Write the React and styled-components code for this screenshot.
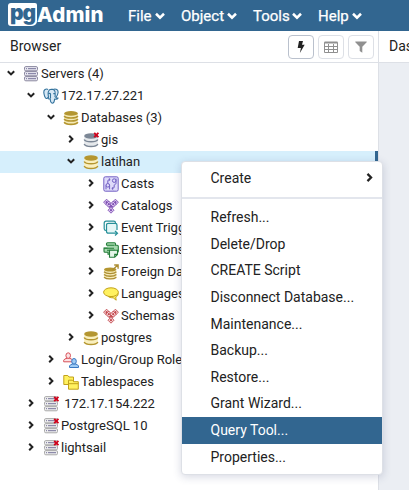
import React from "react";
import styled, { createGlobalStyle, css } from "styled-components";

const Global = createGlobalStyle`
  * { box-sizing: border-box; }
  body { margin: 0; background: #fff; font-family: Roboto, sans-serif; color: #222; overflow: hidden; }
`;

const Shell = styled.div`
  position: relative;
  display: flex;
  flex-direction: column;
  width: 409px;
  height: 490px;
  overflow: hidden;
`;
const Navbar = styled.nav`
  flex: none;
  display: flex;
  align-items: center;
  gap: 16px;
  height: 31px;
  padding-left: 8px;
  background: #326690;
  color: #fff;
`;
const Logo = styled.div`
  display: flex;
  align-items: center;
  width: 104px;
  height: 31px;
  padding-bottom: 2px;
`;
const LogoBadge = styled.span`
  flex: none;
  width: 29px;
  height: 23px;
  border-radius: 3px 2px 5px 3px;
  background: #fff;
  color: #326690;
  font: 900 21px/19px Inter, sans-serif;
  letter-spacing: -1.2px;
  text-align: center;
`;
const LogoName = styled.span`
  font: 800 20.5px/24px Inter, sans-serif;
  letter-spacing: 0.1px;
`;
const NavItem = styled.div`
  flex: none;
  display: flex;
  align-items: center;
  justify-content: space-between;
  width: ${(p) => p.$width}px;
  font-size: 15px;
  font-weight: 400;
  line-height: 30px;
  -webkit-text-stroke: 0.25px #fff;
`;
const Body = styled.div`
  flex: 1;
  display: flex;
  min-height: 0;
`;
const Browser = styled.section`
  width: 379px;
  border-right: 1px solid #dde0e6;
`;
const PanelHeader = styled.header`
  display: flex;
  align-items: center;
  height: 32px;
  padding: 0 4px 0 10px;
  border-bottom: 1px solid #dde0e6;
  background: #fff;
  font-size: 14px;
`;
const Title = styled.span`
  flex: 1;
  padding-bottom: 2px;
`;
const ToolButton = styled.button`
  display: flex;
  align-items: center;
  justify-content: center;
  width: 26px;
  height: 24px;
  margin-left: 4px;
  padding: 0;
  border: 1px solid ${(p) => (p.$active ? "#bac1cd" : "#dde0e6")};
  border-radius: 4px;
  background: #fff;
  color: ${(p) => (p.$active ? "#222" : "#909090")};
`;
const Dashboard = styled.section`
  flex: 1;
  background: #ebeef3;
  overflow: hidden;
`;
const Row = styled.div`
  display: flex;
  align-items: center;
  height: 22px;
  padding-left: ${(p) => 4 + p.$level * 20}px;
  font-size: 13px;
  white-space: pre;
  ${(p) =>
    p.$selected &&
    css`
      background: #d6effc;
      border-right: 3px solid #326690;
    `}
`;
const Caret = styled.span`
  display: flex;
  justify-content: center;
  width: 14px;
  margin: 0 5px 2px 0;
`;
const Glyph = styled.svg`
  flex: none;
  width: 16px;
  height: 16px;
  margin-right: 2px;
`;
const Label = styled.span`
  padding-bottom: 2px;
`;
const Menu = styled.div`
  position: absolute;
  left: 181px;
  top: 161px;
  width: 202px;
  height: 314px;
  padding: 3px 0;
  border: 1px solid #dde0e6;
  border-radius: 4px;
  background: #fff;
  box-shadow: 0 2px 9px rgba(50, 60, 110, 0.2);
`;
const MenuItem = styled.div`
  display: flex;
  align-items: center;
  justify-content: space-between;
  height: 26.6px;
  padding: 0 8px 1px 28.5px;
  font-size: 14px;
  line-height: 16px;
  color: ${(p) => (p.$active ? "#fff" : "#222")};
  background: ${(p) => (p.$active ? "#326690" : "transparent")};
`;
const Divider = styled.div`
  height: 2px;
  margin: 5.4px 0;
  background: #e3e6ed;
`;

const Chevron = ({ open, size = 8 }) => (
  <svg width={size} height={size} viewBox="0 0 8 8" fill="none" stroke="currentColor" strokeWidth="2">
    <path d={open ? "M.8 2.2 4 5.4 7.2 2.2" : "M2.2.8 5.4 4 2.2 7.2"} />
  </svg>
);

const Cross = () => <path d="m11.2.8 4.2 4.4M15.4.8l-4.2 4.4" stroke="#d0021b" strokeWidth="1.9" />;

const Server = ({ off }) => (
  <>
    {[1, 6, 11].map((y) => (
      <g key={y}>
        <rect x="1.5" y={y - 0.4} width="13" height="4.2" rx="1.3" fill={off ? "#eeeeee" : "#e9e8f1"} stroke={off ? "#aaa" : "#8b889f"} />
        <path d={`M3 ${y + 1.7}h1m1 0h8`} stroke="#77739a" />
      </g>
    ))}
    {off && <Cross />}
  </>
);

const Cylinder = ({ top = "#b49631", side = "#f9efbe", line = "#b49631", off }) => (
  <>
    <path d="M1.2 4v8.5c0 1.5 3 2.6 6.8 2.6s6.8-1.1 6.8-2.6V4Z" fill={side} />
    <ellipse cx="8" cy="4" rx="6.8" ry="2.7" fill={top} />
    <path
      d="M1.2 7.5c.8 1.6 3.4 2.3 6.8 2.3s6-.7 6.8-2.3M1.2 12c.8 1.9 3.4 2.6 6.8 2.6s6-.7 6.8-2.6"
      fill="none"
      stroke={line}
      strokeWidth="1.5"
    />
    {off && <Cross />}
  </>
);

const Diamonds = ({ line, fill }) => (
  <>
    {[[3.6, 4.2], [12.4, 4.2], [8, 8.2], [5.8, 6.2], [10.2, 6.2], [8, 12.2]].map(([x, y], i) => (
      <g key={i}>
        <path d={`M${x} ${y - 3}l3 3-3 3-3-3Z`} fill={fill} stroke={line} strokeWidth=".9" />
        <circle cx={x} cy={y} r="1.1" fill={line} />
      </g>
    ))}
  </>
);

const Person = ({ x, y, line, fill }) => (
  <g transform={`translate(${x} ${y})`} fill={fill} stroke={line}>
    <path d="M.5 9.5V8Q1 6.4 4 5.9h2Q9 6.4 9.5 8v1.5Z" />
    <ellipse cx="5" cy="3.3" rx="2.3" ry="2.8" />
  </g>
);

const icons = {
  servers: <Server />,
  serverOff: <Server off />,
  elephant: (
    <g fill="#d7e8f5" stroke="#34739d" strokeWidth="1.1" strokeLinejoin="round">
      <path d="M5.2 1.4C2.7.4.7 1.8.8 4.3c.1 2.5 1.3 5.8 2.5 6.2 1 .3 1.6-1 2.3-1.8" />
      <path d="M10 1.4c3-1.2 5.4.5 5.1 3.1-.2 2-1.3 4-2.3 5.2 1 .4 2 .2 2.3.3-.5 1.2-2 1.5-3.5 1.1-.2 2.3-.5 4.1-2.3 4.1-1.9 0-2-2-2.1-4.6-1 .8-2 .5-2.1-.3.8-.7.3-1.8.1-3.2-.3-2.8.3-5.8 3-5.9Z" />
      <path d="M5.3 5.9c1-.8 2-.6 2.2.2.2 1.2-.3 2.3.1 4M10.6 1.5c1.4 1.3 2 2.8 1.6 4.2-.3 1.5.5 2.4-.5 3.5M11.9 5.4l-1.6.2" fill="none" />
    </g>
  ),
  databases: (
    <>
      <path d="M1.2 4v8.5c0 1.5 3 2.6 6.8 2.6s6.8-1.1 6.8-2.6V4Z" fill="#f5eab7" />
      <ellipse cx="8" cy="3.4" rx="6.8" ry="2.4" fill="#b49631" />
      <path d="M1.2 6c.8 1.4 3.4 2 6.8 2s6-.6 6.8-2M1.2 9c.8 1.4 3.4 2 6.8 2s6-.6 6.8-2M1.2 12.2c.8 1.6 3.4 2.2 6.8 2.2s6-.6 6.8-2.2" fill="none" stroke="#b49631" strokeWidth="1.6" />
    </>
  ),
  dbOff: <Cylinder top="#7c8796" side="#e5e8eb" line="#7c8796" off />,
  db: <Cylinder />,
  casts: (
    <g fill="none" stroke="#7260c3">
      <rect x=".8" y=".8" width="14.4" height="14.4" rx="1.5" fill="#dedafa" />
      <path d="M4.8 7.2V5Q4.8 3.5 7 3.5M5.8 2.2 7.2 3.5 5.8 4.8M11.2 8.8V11q0 1.5-2.2 1.5m1.2-1.3L8.8 12.5l1.4 1.3" />
      <circle cx="4.8" cy="9.3" r="1.8" />
      <path d="M3 9.4v3.9m3.6-3.9v3.9" />
      <circle cx="11.2" cy="4.6" r="1.8" />
      <path d="M13 2.6v4.8q0 1-1.5 1" />
    </g>
  ),
  catalogs: <Diamonds line="#8050b4" fill="#dac8ef" />,
  schemas: <Diamonds line="#c34a50" fill="#f6d7d8" />,
  trigger: (
    <g fill="none" stroke="#279099" strokeWidth="1.2">
      <path d="M3.5 10.5H3a1.8 1.8 0 0 1-1.8-1.8V3A1.8 1.8 0 0 1 3 1.2h7.7a1.8 1.8 0 0 1 1.8 1.8" />
      <path d="M14 10V5a1.7 1.7 0 0 0-1.7-1.7H5.2A1.7 1.7 0 0 0 3.5 5v6.5a1.7 1.7 0 0 0 1.7 1.7H14" fill="#e4f6f6" />
      <path d="m12 11 2.5 2.2L12 15.5" />
    </g>
  ),
  extensions: (
    <g fill="#a5d8ae" stroke="#257d3a" strokeWidth="1.1">
      <path d="M3.5 3.2V1.8q0-1 1-1h7q1 0 1 1v1.4h1.8q1 0 1 1v5q0 1-1 1h-2.8v2H5v-2H2q-1 0-1-1V6h3.5" />
      <path d="M3.5 3.2h8M1 6.2h10M4 8.2h8" fill="none" />
      <path d="M6.5 8.2h8v4.2l-2.8 2.8H6.5ZM14.5 12.4h-2.8v2.8" fill="#e5f5e8" />
    </g>
  ),
  foreign: (
    <>
      <path d="M1 5.5v7.8q1.7 2 6.2 2t6.2-2V5.5Z" fill="#f5eab7" />
      <ellipse cx="7.2" cy="5.5" rx="6.2" ry="2" fill="#b49631" />
      <path d="M1 7.8q2 1.8 6.2 1.8t6.2-1.8M1 10.5q2 1.8 6.2 1.8t6.2-1.8M1 13.2q2 1.7 6.2 1.7t6.2-1.7M9.5 6 14.8 1M11.2 1h3.9v3.8" fill="none" stroke="#ad8e34" strokeWidth="1.4" />
    </>
  ),
  languages: (
    <g fill="#fff15f" stroke="#c2a21b">
      <path d="M15.2 7.5c0 2-1.2 3.1-2.5 3.7l.5 3-3-2.4c-2.2.1-4.2-.5-5.2-1.6Z" />
      <ellipse cx="8" cy="6.2" rx="7.4" ry="4.4" />
    </g>
  ),
  roles: (
    <>
      <Person x={0.2} y={0.3} line="#d84f57" fill="#fbe2e4" />
      <Person x={6} y={6} line="#3a78c2" fill="#9fccf5" />
    </>
  ),
  tablespaces: (
    <g fill="#fff15f" stroke="#c2a21b">
      <path d="M.8 10.5v-9h4l1.2 1.5h4.5v7.5Z" />
      <path d="M5.5 15.2v-9h4l1.2 1.5h4.6v7.5ZM5.5 9.7h9.7" />
    </g>
  ),
};

const nodes = [
  [0, true, "servers", "Servers (4)"],
  [1, true, "elephant", "172.17.27.221"],
  [2, true, "databases", "Databases (3)"],
  [3, false, "dbOff", "gis"],
  [3, true, "db", "latihan", true],
  [4, false, "casts", "Casts"],
  [4, false, "catalogs", "Catalogs"],
  [4, false, "trigger", "Event Trigg"],
  [4, false, "extensions", "Extensions"],
  [4, false, "foreign", "Foreign Da"],
  [4, false, "languages", "Languages"],
  [4, false, "schemas", "Schemas"],
  [3, false, "db", "postgres"],
  [2, false, "roles", "Login/Group Role"],
  [2, false, "tablespaces", "Tablespaces"],
  [1, false, "serverOff", " 172.17.154.222"],
  [1, false, "serverOff", "PostgreSQL 10"],
  [1, false, "serverOff", "lightsail"],
];

const actions = [
  "Refresh...",
  "Delete/Drop",
  "CREATE Script",
  "Disconnect Database...",
  "Maintenance...",
  "Backup...",
  "Restore...",
  "Grant Wizard...",
  "Query Tool...",
  "Properties...",
];

export default function App() {
  return (
    <Shell>
      <Global />
      <Navbar>
        <Logo>
          <LogoBadge>pg</LogoBadge>
          <LogoName>Admin</LogoName>
        </Logo>
        {[["File", 37], ["Object", 56], ["Tools", 49], ["Help", 44]].map(([label, width]) => (
          <NavItem key={label} $width={width}>
            {label}
            <Chevron open size={10} />
          </NavItem>
        ))}
      </Navbar>
      <Body>
        <Browser>
          <PanelHeader>
            <Title>Browser</Title>
            <ToolButton $active aria-label="Query tool">
              <svg width="8" height="12" viewBox="0 0 8 12" fill="currentColor">
                <path d="M2 0h4L5 3.8h2.7L2.9 12l1-5H.7Z" />
              </svg>
            </ToolButton>
            <ToolButton aria-label="View data">
              <svg width="14" height="12" viewBox="0 0 14 12" fill="none" stroke="currentColor">
                <path d="M.5 1.5h13v10H.5ZM.5 5.5h13M.5 8.5h13M4.5 3v8.5M9.5 3v8.5" />
                <path d="M.5 1.5h13" strokeWidth="2" />
              </svg>
            </ToolButton>
            <ToolButton aria-label="Filtered rows">
              <svg width="12" height="12" viewBox="0 0 12 12" fill="currentColor">
                <path d="M.3.5h11.4v.8L7.3 5.8v6L4.7 9.9V5.8L.3 1.3Z" />
              </svg>
            </ToolButton>
          </PanelHeader>
          {nodes.map(([level, open, icon, label, selected]) => (
            <Row key={label} $level={level} $selected={selected}>
              <Caret>
                <Chevron open={open} />
              </Caret>
              <Glyph viewBox="0 0 16 16">{icons[icon]}</Glyph>
              <Label>{label}</Label>
            </Row>
          ))}
        </Browser>
        <Dashboard>
          <PanelHeader>
            <Title>Das</Title>
          </PanelHeader>
        </Dashboard>
      </Body>
      <Menu>
        <MenuItem>
          Create
          <Chevron size={9} />
        </MenuItem>
        <Divider />
        {actions.map((label) => (
          <MenuItem key={label} $active={label === "Query Tool..."}>
            {label}
          </MenuItem>
        ))}
      </Menu>
    </Shell>
  );
}
